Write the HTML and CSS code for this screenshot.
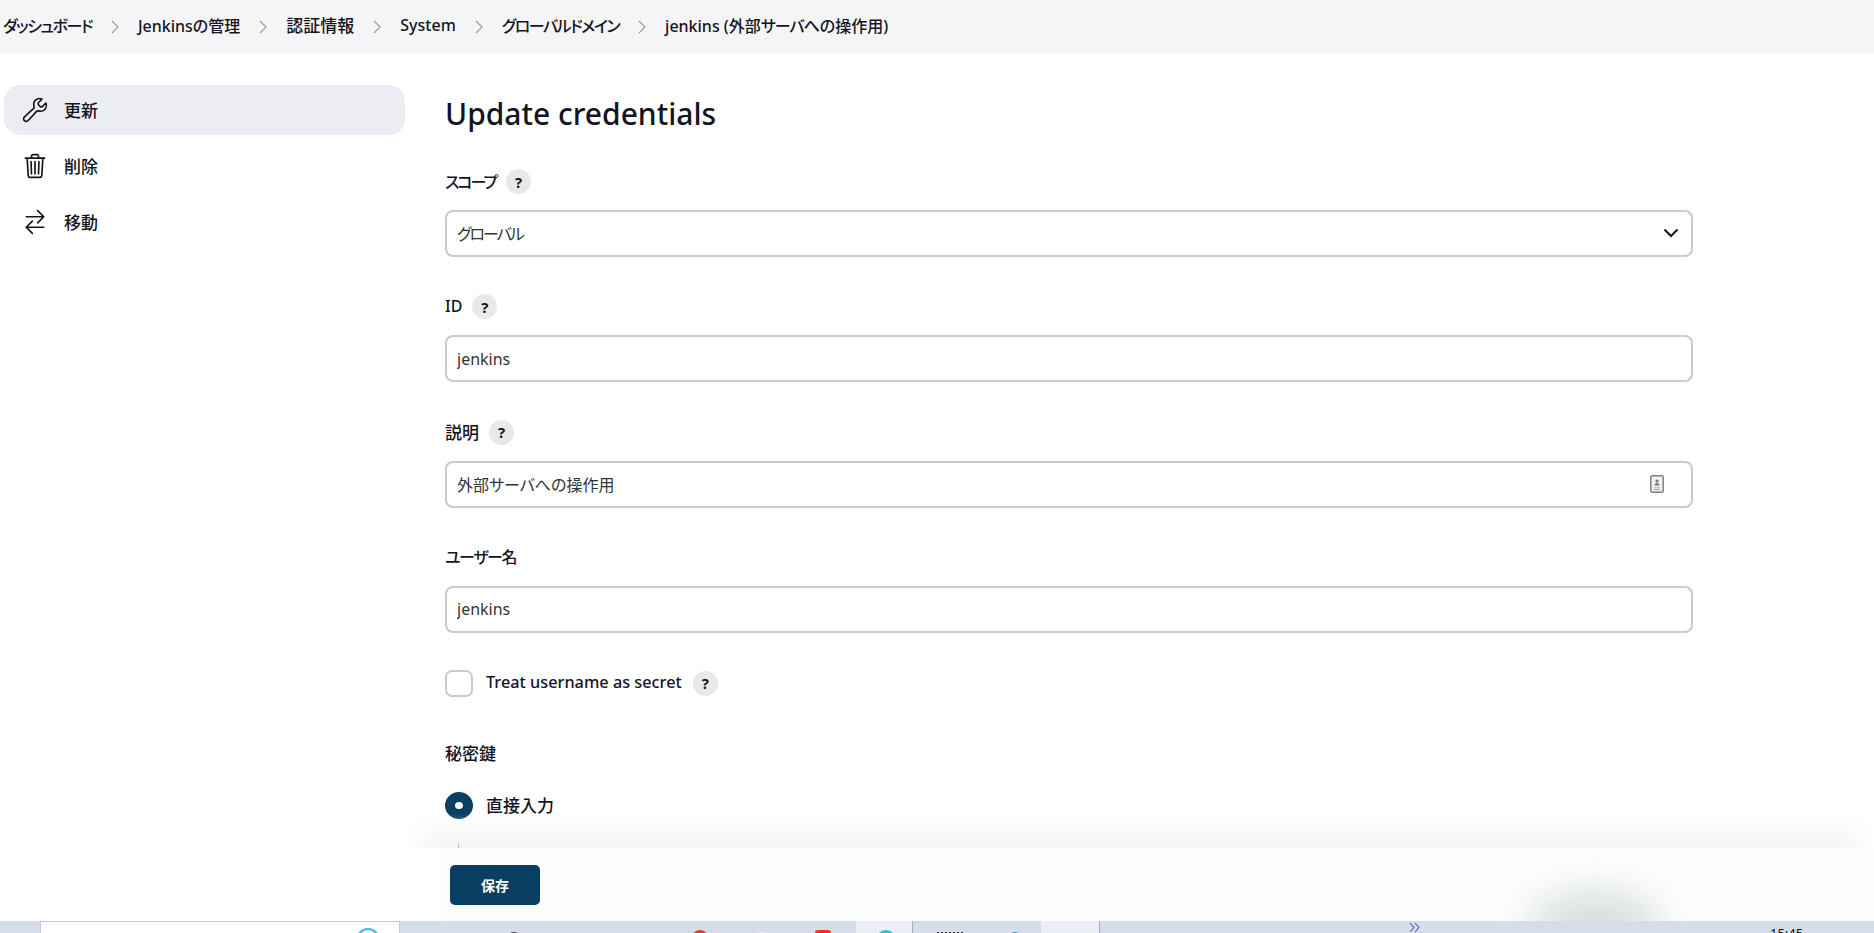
FILE: index.html
```html
<!DOCTYPE html>
<html lang="ja">
  <head>
    <meta charset="utf-8" />
    <title>Update credentials</title>
    <link rel="stylesheet" href="styles.css">
  </head>
  <body>
    <div class="page">
      <nav class="breadcrumbs">
        <a class="crumb kana">ダッシュボード</a>
        <svg class="crumb-sep" viewBox="0 0 8 14"><path d="M1 1l6 6-6 6" /></svg>
        <a class="crumb">Jenkinsの管理</a>
        <svg class="crumb-sep" viewBox="0 0 8 14"><path d="M1 1l6 6-6 6" /></svg>
        <a class="crumb kanji">認証情報</a>
        <svg class="crumb-sep" viewBox="0 0 8 14"><path d="M1 1l6 6-6 6" /></svg>
        <a class="crumb">System</a>
        <svg class="crumb-sep" viewBox="0 0 8 14"><path d="M1 1l6 6-6 6" /></svg>
        <a class="crumb kana">グローバルドメイン</a>
        <svg class="crumb-sep" viewBox="0 0 8 14"><path d="M1 1l6 6-6 6" /></svg>
        <a class="crumb">jenkins (外部<span class="kana">サーバ</span>への操作用)</a>
      </nav>

      <div class="main">
        <aside class="side">
          <a class="side-item active">
            <svg class="side-icon" viewBox="0 0 512 512">
              <path d="M393.87 190a32.1 32.1 0 01-45.25 0l-26.57-26.57a32.09 32.09 0 010-45.26L382.19 58a1 1 0 00-.3-1.64c-38.82-16.64-89.15-8.16-121.11 23.57-30.58 30.35-32.32 76-21.12 115.84a31.93 31.93 0 01-9.06 32.08L64 380a48.17 48.17 0 1068 68l153.2-167a31.93 31.93 0 0131.46-9c39.54 10.59 84.54 8.6 114.72-21.19 32.49-32 39.5-88.56 23.75-120.93a1 1 0 00-1.6-.26z" />
            </svg>
            <span class="side-text">更新</span>
          </a>
          <a class="side-item">
            <svg class="side-icon" viewBox="0 0 512 512">
              <path d="M112 112l20 320c.95 18.49 14.4 32 32 32h184c17.67 0 30.87-13.51 32-32l20-320" />
              <path d="M80 112h352" />
              <path d="M192 112V72a23.93 23.93 0 0124-24h80a23.93 23.93 0 0124 24v40M256 176v224M184 176l8 224M328 176l-8 224" />
            </svg>
            <span class="side-text">削除</span>
          </a>
          <a class="side-item">
            <svg class="side-icon" viewBox="0 0 512 512">
              <path d="M304 48l112 112-112 112M398.87 160H96M208 464L96 352l112-112M114 352h302" />
            </svg>
            <span class="side-text">移動</span>
          </a>
        </aside>

        <form class="content">
          <h1 class="title">Update credentials</h1>

          <div class="field">
            <div class="field-label"><span class="kana-label">スコープ</span> <span class="help">?</span></div>
            <div class="select-wrap">
              <select class="input input-kana">
                <option>グローバル</option>
              </select>
              <svg class="select-arrow" viewBox="0 0 16 10"><path d="M1.5 1.5L8 8l6.5-6.5" /></svg>
            </div>
          </div>

          <div class="field">
            <div class="field-label label-latin">ID <span class="help">?</span></div>
            <input class="input" type="text" value="jenkins" />
          </div>

          <div class="field">
            <div class="field-label">説明 <span class="help">?</span></div>
            <div class="select-wrap">
              <input class="input" type="text" value="外部サーバへの操作用" />
              <svg class="contact-icon" viewBox="0 0 14 18">
                <rect x="0.8" y="0.8" width="12.4" height="16.4" rx="1.5" class="contact-frame" />
                <circle cx="7" cy="6" r="1.6" class="contact-fill" />
                <path d="M4.6 10.4c0-1.6 1.1-2.3 2.4-2.3s2.4.7 2.4 2.3z" class="contact-fill" />
                <path d="M4 12.8h6M4 14.6h6" class="contact-line" />
              </svg>
            </div>
          </div>

          <div class="field">
            <div class="field-label"><span class="kana-label user-label">ユーザー名</span></div>
            <input class="input" type="text" value="jenkins" />
          </div>

          <div class="check-row secret-row">
            <span class="checkbox"></span>
            <span class="check-label">Treat username as secret</span>
            <span class="help">?</span>
          </div>

          <div class="field-label key-label">秘密鍵</div>

          <div class="check-row">
            <span class="radio"></span>
            <span class="check-label radio-label">直接入力</span>
          </div>

          <div class="textarea-edge"></div>
        </form>
      </div>

      <div class="save-bar">
        <div class="save-inner">
          <div class="save-smudge"></div>
          <button class="save-button" type="button">保存</button>
        </div>
      </div>
    </div>

    <footer class="taskbar">
      <div class="tb-search">
        <span class="tb-search-ring"></span>
      </div>
      <div class="tb-icons">
        <span class="tb-dot tb-gray"></span>
        <span class="tb-dot tb-red"></span>
        <span class="tb-dot tb-white"></span>
        <span class="tb-dot tb-orange"></span>
      </div>
      <div class="tb-active"><span class="tb-dot tb-cyan"></span></div>
      <div class="tb-running">
        <span class="tb-stripes"></span>
        <span class="tb-dot tb-blue"></span>
      </div>
      <div class="tb-active tb-active-empty"></div>
      <div class="tb-tray">
        <svg class="tb-more" viewBox="0 0 11 11"><path d="M1 1l4 4.5L1 10M6 1l4 4.5L6 10" /></svg>
        <span class="tb-clock">15:45</span>
      </div>
    </footer>
  </body>
</html>
```

FILE: styles.css
```css
html,
body {
  margin: 0;
  padding: 0;
  height: 100%;
  overflow: hidden;
  background: #fff;
}

body {
  display: flex;
  flex-direction: column;
  font-family: "Noto Sans", "Noto Sans CJK JP", sans-serif;
  font-feature-settings: "palt";
  color: #14141f;
}

.page {
  position: relative;
  height: 921px;
  overflow: hidden;
}

/* Breadcrumbs */

.breadcrumbs {
  display: flex;
  align-items: center;
  box-sizing: border-box;
  height: 53px;
  padding: 0 0 4px 3px;
  background: #f5f5f7;
  font-size: 16px;
  font-weight: 500;
}

.crumb.kana {
  letter-spacing: -1.5px;
}

.crumb .kana {
  letter-spacing: -1px;
}

.crumb.kanji {
  font-size: 17px;
}

.crumb-sep {
  width: 8px;
  height: 14px;
  margin: 4px 19px 0;
  fill: none;
  stroke: #9a9aa3;
  stroke-width: 1.2;
}

/* Side panel */

.main {
  display: flex;
}

.side {
  width: 401px;
  margin: 32px 0 0 4px;
}

.side-item {
  display: flex;
  align-items: center;
  gap: 15px;
  height: 50px;
  margin-bottom: 6px;
  padding-left: 17px;
  border-radius: 16px;
  font-size: 17px;
  font-weight: 500;
}

.side-text {
  margin-bottom: 2px;
}

.side-item.active {
  background: #ecedf2;
}

.side-icon {
  width: 28px;
  height: 28px;
  fill: none;
  stroke: #14141f;
  stroke-width: 30;
  stroke-linecap: round;
  stroke-linejoin: round;
}

/* Form */

.content {
  width: 1248px;
  margin-left: 40px;
}

.title {
  margin: 0 0 34.4px;
  padding-top: 39px;
  height: 43px;
  line-height: 43px;
  font-size: 30px;
  font-weight: 500;
}

.field {
  margin-bottom: 37.1px;
}

.field-label {
  display: flex;
  align-items: center;
  gap: 10px;
  box-sizing: border-box;
  height: 25px;
  margin-bottom: 16px;
  padding-bottom: 2px;
  font-size: 17px;
  font-weight: 500;
}

.label-latin {
  font-size: 16px;
}

.kana-label {
  font-size: 16px;
  letter-spacing: -2px;
}

.user-label {
  letter-spacing: -1.4px;
}

.help {
  display: flex;
  align-items: center;
  justify-content: center;
  width: 25px;
  height: 25px;
  margin-bottom: -2px;
  border-radius: 50%;
  background: #e9e9e9;
  font-size: 15px;
  font-weight: 700;
  letter-spacing: 0;
}

.input {
  display: block;
  box-sizing: border-box;
  width: 100%;
  height: 47px;
  padding: 0 10px;
  border: 2px solid #c3ccd1;
  border-radius: 8px;
  background: #fff;
  font-family: inherit;
  font-feature-settings: "palt";
  font-size: 16px;
  color: #333;
  appearance: none;
  outline: none;
}

.input-kana {
  letter-spacing: -2px;
}

.select-wrap {
  position: relative;
}

.select-arrow {
  position: absolute;
  top: 18px;
  right: 14px;
  width: 16px;
  height: 10px;
  fill: none;
  stroke: #14141f;
  stroke-width: 2;
}

.contact-icon {
  position: absolute;
  top: 14px;
  right: 29px;
  width: 14px;
  height: 18px;
}

.contact-frame {
  fill: #f1f1f1;
  stroke: #808080;
  stroke-width: 1.5;
}

.contact-fill {
  fill: #777;
}

.contact-line {
  fill: none;
  stroke: #aaa;
  stroke-width: 1;
}

.check-row {
  display: flex;
  align-items: center;
  height: 27px;
  font-size: 16.3px;
  font-weight: 500;
}

.secret-row {
  margin-top: 1px;
}

.secret-row .help {
  margin: 0 0 0 1px;
}

.check-label {
  margin: 0 10px 2px 13px;
}

.radio-label {
  font-size: 17px;
}

.checkbox {
  box-sizing: border-box;
  width: 28px;
  height: 27px;
  border: 2px solid #c3ccd1;
  border-radius: 7px;
}

.radio {
  box-sizing: border-box;
  width: 28px;
  height: 27px;
  border: 10px solid #083f63;
  border-radius: 50%;
  background: #fff;
}

.key-label {
  margin-top: 44px;
  margin-bottom: 26.6px;
}

.textarea-edge {
  position: relative;
  z-index: 1;
  width: 1px;
  height: 5px;
  margin: 24px 0 0 13px;
  background: #b8c0c8;
}

/* Save bar, sits over the bottom of the form */

.save-bar {
  position: absolute;
  left: 0;
  right: 0;
  bottom: 0;
  height: 73px;
  background: #fff;
}

.save-bar::before {
  content: "";
  position: absolute;
  left: 405px;
  right: 0;
  bottom: 100%;
  height: 34px;
  background: linear-gradient(rgba(243, 243, 243, 0), #f3f3f3);
  -webkit-mask-image: linear-gradient(90deg, transparent, #000 40px, #000 calc(100% - 40px), transparent);
  mask-image: linear-gradient(90deg, transparent, #000 40px, #000 calc(100% - 40px), transparent);
}

.save-inner {
  position: relative;
  height: 100%;
  margin-left: 445px;
  padding: 17px 0 0 5px;
  box-sizing: border-box;
  background: #fdfdfd;
  overflow: hidden;
}

.save-smudge {
  position: absolute;
  left: 1085px;
  top: 42px;
  width: 130px;
  height: 70px;
  border-radius: 50%;
  background: #d9dfdf;
  filter: blur(18px);
}

.save-button {
  position: relative;
  display: block;
  width: 90px;
  height: 40px;
  border: 0;
  border-radius: 5px;
  background: #083f63;
  color: #fff;
  font-family: inherit;
  font-size: 14px;
  font-weight: 700;
}

/* Windows taskbar, cut off by the window edge */

.taskbar {
  display: flex;
  flex: 1;
  overflow: hidden;
  background: #d6dcea;
}

.tb-search {
  position: relative;
  box-sizing: border-box;
  width: 360px;
  height: 40px;
  margin-left: 40px;
  background: #fff;
  border: 1px solid #c8c8c8;
}

.tb-search-ring {
  position: absolute;
  top: 6px;
  right: 19px;
  box-sizing: border-box;
  width: 24px;
  height: 24px;
  border: 2px solid #3bb4ee;
  border-radius: 50%;
}

.tb-icons {
  position: relative;
  width: 456px;
}

.tb-dot {
  position: absolute;
  top: 9px;
  width: 16px;
  height: 16px;
  border-radius: 50%;
}

.tb-gray {
  left: 106px;
  background: #555;
  top: 11px;
}

.tb-red {
  left: 291px;
  background: #e8352c;
  width: 18px;
  height: 18px;
}

.tb-white {
  left: 354px;
  background: #eee;
  top: 11px;
}

.tb-orange {
  left: 415px;
  background: #f5301a;
  width: 16px;
  border-radius: 3px;
}

.tb-active {
  position: relative;
  width: 56px;
  border-right: 1px solid #a9aebc;
  background: #eceef6;
}

.tb-cyan {
  left: 20px;
  width: 20px;
  height: 20px;
  background: #1fc8d0;
}

.tb-running {
  position: relative;
  width: 124px;
  margin-left: 4px;
}

.tb-stripes {
  position: absolute;
  left: 20px;
  top: 11px;
  width: 26px;
  height: 6px;
  background: repeating-linear-gradient(90deg, #333 0 2px, transparent 2px 4px);
}

.tb-blue {
  left: 92px;
  top: 11px;
  width: 12px;
  height: 12px;
  background: #2f9fe8;
}

.tb-active-empty {
  width: 58px;
}

.tb-tray {
  position: relative;
  flex: 1;
}

.tb-more {
  position: absolute;
  left: 309px;
  top: 1px;
  width: 11px;
  height: 11px;
  fill: none;
  stroke: #5560a8;
  stroke-width: 1.1;
}

.tb-clock {
  position: absolute;
  left: 670px;
  top: 4px;
  font-size: 13px;
  line-height: 16px;
  color: #111;
}
```
